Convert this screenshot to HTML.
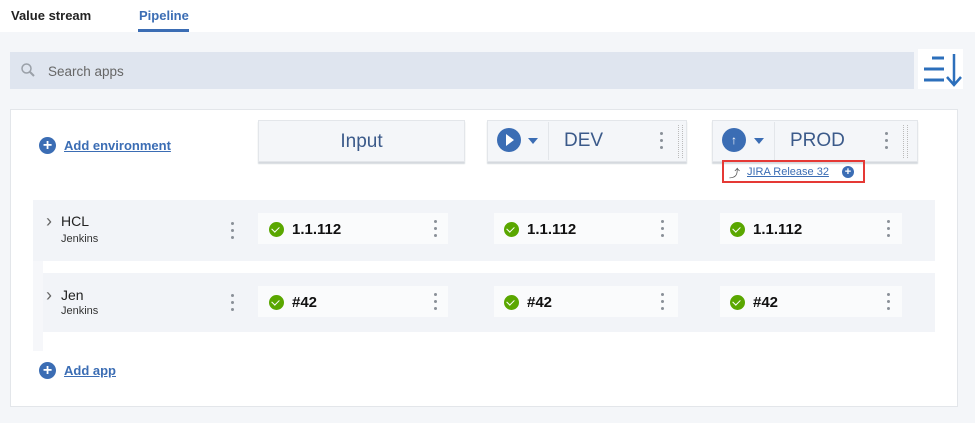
<!DOCTYPE html><html><head><style>
*{box-sizing:border-box;margin:0;padding:0}
body{width:975px;height:423px;background:#f4f6f9;font-family:"Liberation Sans",sans-serif;position:relative;overflow:hidden}
.a{position:absolute}
.top{left:0;top:0;width:975px;height:32px;background:#fff}
.tab{font-size:13px;font-weight:bold;top:8px}
.card{background:#f4f6f9;border:1px solid #e3e6ea;box-shadow:0 2px 1px #d5d9de;height:42px}
.circ{border-radius:50%;background:#3b6db4;color:#fff}
.dots{width:3px}
.dots i{display:block;width:3px;height:3px;border-radius:50%;background:#8a9098;margin-bottom:4px}
.cell{background:#fafbfc;height:31px}
.ok{width:15px;height:15px;border-radius:50%;background:#5aa700}
.ok:after{content:"";position:absolute;left:4px;top:3px;width:4px;height:6px;border:solid #fff;border-width:0 1.5px 1.5px 0;transform:rotate(45deg)}
.v{font-size:15px;font-weight:bold;color:#111}
.lnk{color:#3b6db4;font-size:13px;font-weight:bold;text-decoration:underline}
.chev{font-size:18px;color:#666;line-height:18px}
</style></head><body>
<div class="a top"></div>
<div class="a tab" style="left:11px;color:#222">Value stream</div>
<div class="a tab" style="left:139px;color:#3b6db4">Pipeline</div>
<div class="a" style="left:138px;top:29px;width:51px;height:3px;background:#3b6db4"></div>
<div class="a" style="left:10px;top:52px;width:904px;height:37px;background:#dfe5ef"></div>
<svg class="a" style="left:20px;top:62px" width="16" height="16"><circle cx="6.5" cy="6.5" r="4.5" fill="none" stroke="#9aa0a8" stroke-width="1.5"/><path d="M10 10l4 4" stroke="#9aa0a8" stroke-width="2"/></svg>
<div class="a" style="left:48px;top:64px;font-size:13.5px;color:#666">Search apps</div>
<div class="a" style="left:918px;top:49px;width:45px;height:40px;background:#fff"></div>
<svg class="a" style="left:920px;top:52px" width="44" height="36"><path d="M12 6h12M4 17h20M4 28h20" stroke="#2c6fbb" stroke-width="3"/><path d="M34 2v31M27 25l7 8 7-8" stroke="#2c6fbb" stroke-width="2.5" fill="none"/></svg>
<div class="a" style="left:10px;top:109px;width:948px;height:298px;background:#fff;border:1px solid #e3e6ea"></div>
<div class="a circ" style="left:39px;top:137px;width:17px;height:17px;text-align:center;font-size:16px;line-height:17px;font-weight:bold">+</div>
<div class="a lnk" style="left:64px;top:138px">Add environment</div>
<div class="a card" style="left:258px;top:120px;width:207px"></div>
<div class="a" style="left:258px;top:131px;width:207px;text-align:center;font-size:19px;color:#3b5a8a">Input</div>
<div class="a card" style="left:487px;top:120px;width:200px"></div>
<div class="a circ" style="left:497px;top:128px;width:24px;height:24px"></div>
<div class="a" style="left:506px;top:134px;border-left:8px solid #fff;border-top:6px solid transparent;border-bottom:6px solid transparent"></div>
<div class="a" style="left:528px;top:138px;border-top:6px solid #3b6db4;border-left:5px solid transparent;border-right:5px solid transparent"></div>
<div class="a" style="left:548px;top:122px;width:1px;height:38px;background:#e3e6ea"></div>
<div class="a" style="left:564px;top:130px;font-size:19px;color:#3b5a8a">DEV</div>
<div class="a dots" style="left:660px;top:132px"><i></i><i></i><i></i></div>
<div class="a" style="left:678px;top:125px;width:5px;height:33px;border-left:1px dotted #bbb;border-right:1px dotted #bbb"></div>
<div class="a card" style="left:712px;top:120px;width:206px"></div>
<div class="a circ" style="left:722px;top:128px;width:24px;height:24px;font-size:12px;text-align:center;line-height:24px">↑</div>
<div class="a" style="left:754px;top:138px;border-top:6px solid #3b6db4;border-left:5px solid transparent;border-right:5px solid transparent"></div>
<div class="a" style="left:774px;top:122px;width:1px;height:38px;background:#e3e6ea"></div>
<div class="a" style="left:790px;top:130px;font-size:19px;color:#3b5a8a">PROD</div>
<div class="a dots" style="left:885px;top:132px"><i></i><i></i><i></i></div>
<div class="a" style="left:903px;top:125px;width:5px;height:33px;border-left:1px dotted #bbb;border-right:1px dotted #bbb"></div>
<div class="a" style="left:722px;top:160px;width:143px;height:23px;border:2px solid #e53935"></div>
<div class="a" style="left:729px;top:165px;font-size:11px;color:#555">⤴</div>
<div class="a" style="left:747px;top:166px;font-size:11px;color:#3b6db4;text-decoration:underline">JIRA Release 32</div>
<div class="a circ" style="left:842px;top:166px;width:12px;height:12px;font-size:11px;line-height:12px;text-align:center;font-weight:bold">+</div>
<div class="a" style="left:33px;top:200px;width:902px;height:61px;background:#f2f4f8"></div>
<div class="a" style="left:33px;top:273px;width:902px;height:59px;background:#f2f4f8"></div>
<div class="a" style="left:33px;top:261px;width:10px;height:90px;background:#f6f7fa"></div>
<div class="a chev" style="left:46px;top:212px">›</div>
<div class="a" style="left:61px;top:213px;font-size:14px;color:#222">HCL</div>
<div class="a" style="left:61px;top:233px;font-size:11px;color:#333">Jenkins</div>
<div class="a dots" style="left:231px;top:222px"><i></i><i></i><i></i></div>
<div class="a chev" style="left:46px;top:286px">›</div>
<div class="a" style="left:61px;top:287px;font-size:14px;color:#222">Jen</div>
<div class="a" style="left:61px;top:305px;font-size:11px;color:#333">Jenkins</div>
<div class="a dots" style="left:231px;top:294px"><i></i><i></i><i></i></div>

<div class="a cell" style="left:258px;top:213px;width:190px"></div>
<div class="a cell" style="left:494px;top:213px;width:184px"></div>
<div class="a cell" style="left:720px;top:213px;width:182px"></div>
<div class="a cell" style="left:258px;top:286px;width:190px"></div>
<div class="a cell" style="left:494px;top:286px;width:184px"></div>
<div class="a cell" style="left:720px;top:286px;width:182px"></div>

<div class="a ok" style="left:269px;top:222px"></div><div class="a v" style="left:292px;top:221px">1.1.112</div><div class="a dots" style="left:434px;top:220px"><i></i><i></i><i></i></div>
<div class="a ok" style="left:504px;top:222px"></div><div class="a v" style="left:527px;top:221px">1.1.112</div><div class="a dots" style="left:661px;top:220px"><i></i><i></i><i></i></div>
<div class="a ok" style="left:730px;top:222px"></div><div class="a v" style="left:753px;top:221px">1.1.112</div><div class="a dots" style="left:887px;top:220px"><i></i><i></i><i></i></div>
<div class="a ok" style="left:269px;top:295px"></div><div class="a v" style="left:292px;top:294px">#42</div><div class="a dots" style="left:434px;top:293px"><i></i><i></i><i></i></div>
<div class="a ok" style="left:504px;top:295px"></div><div class="a v" style="left:527px;top:294px">#42</div><div class="a dots" style="left:661px;top:293px"><i></i><i></i><i></i></div>
<div class="a ok" style="left:730px;top:295px"></div><div class="a v" style="left:753px;top:294px">#42</div><div class="a dots" style="left:887px;top:293px"><i></i><i></i><i></i></div>

<div class="a circ" style="left:39px;top:362px;width:17px;height:17px;text-align:center;font-size:16px;line-height:17px;font-weight:bold">+</div>
<div class="a lnk" style="left:64px;top:363px">Add app</div>
</body></html>
